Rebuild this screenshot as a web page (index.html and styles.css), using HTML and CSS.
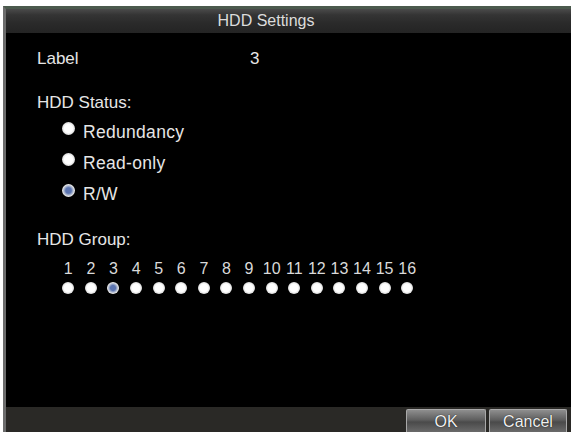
FILE: index.html
```html
<!DOCTYPE html>
<html lang="en">
<head>
  <meta charset="UTF-8">
  <title>HDD Settings</title>
  <link rel="stylesheet" href="styles.css">
</head>
<body>
<div class="window">
  <div class="titlebar">HDD Settings</div>

  <div class="content">
    <div class="row-label">
      <span class="label-name">Label</span>
      <span class="label-value">3</span>
    </div>

    <div class="section-title">HDD Status:</div>
    <div class="radio-list">
      <div class="radio-row"><span class="radio"></span>Redundancy</div>
      <div class="radio-row"><span class="radio"></span>Read-only</div>
      <div class="radio-row"><span class="radio checked"></span>R/W</div>
    </div>

    <div class="section-title group-title">HDD Group:</div>
    <div class="group-grid" id="group-grid"></div>
  </div>

  <div class="footer">
    <button class="btn btn-ok">OK</button>
    <button class="btn btn-cancel">Cancel</button>
  </div>
</div>

<script>
  const grid = document.getElementById("group-grid");
  let nums = "";
  let dots = "";
  for (let i = 1; i <= 16; i++) {
    nums += `<span class="num">${i}</span>`;
    dots += `<span class="dot${i === 3 ? " checked" : ""}"></span>`;
  }
  grid.innerHTML = nums + dots;
</script>
</body>
</html>
```

FILE: styles.css
```css
body {
  margin: 0;
  background: #ffffff;
  font-family: "Liberation Sans", Arial, sans-serif;
}
.window {
  margin: 6px 0 0 3px;
  height: 423px;
  border-top: 3px solid #4b5a4d;
  border-left: 3px solid #6c6c6c;
  background: #000000;
  display: flex;
  flex-direction: column;
  color: #e6e6e6;
}
.titlebar {
  height: 24px;
  line-height: 24px;
  font-size: 16px;
  text-align: center;
  padding-right: 45px;
  color: #dcdcdc;
  background: linear-gradient(#4a4a4a, #343434 25%, #2a2a2a 60%, #242424);
}
.content {
  flex: 1;
  padding: 16px 0 0 31px;
  font-size: 17px;
}
.row-label {
  display: flex;
  line-height: 20px;
}
.label-name {
  width: 213px;
}
.section-title {
  margin-top: 24px;
  line-height: 20px;
}
.radio-list {
  margin-top: 4px;
  padding-left: 25px;
  font-size: 17.5px;
  letter-spacing: 0.3px;
}
.radio-row {
  display: flex;
  height: 31px;
  line-height: 30px;
}
.radio {
  width: 13px;
  height: 13px;
  margin: 5px 8px 0 0;
  border-radius: 50%;
  background: radial-gradient(circle, #ffffff 45%, #d8d8d8 70%, #666666 100%);
}
.radio.checked,
.dot.checked {
  background: radial-gradient(circle, #5b74b0 30%, #9aa8c8 45%, #e8e8e8 65%, #8a8a8a 100%);
}
.group-title {
  margin-top: 20px;
}
.group-grid {
  margin: 10px 0 0 20px;
  display: grid;
  grid-template-columns: repeat(16, 22.6px);
  justify-items: center;
  align-items: center;
  row-gap: 4px;
}
.num {
  font-size: 16px;
  line-height: 18px;
  color: #dadada;
}
.dot {
  width: 12px;
  height: 12px;
  border-radius: 50%;
  background: radial-gradient(circle, #ffffff 45%, #dddddd 68%, #666666 100%);
}
.footer {
  height: 25px;
  background: #2a2926;
  display: flex;
  justify-content: flex-end;
  align-items: flex-start;
  padding: 2px 4px 0 0;
  box-sizing: border-box;
  gap: 3px;
}
.btn {
  height: 23px;
  font-family: "Liberation Sans", Arial, sans-serif;
  font-size: 16px;
  color: #f0f0f0;
  border: 1px solid #a9a9a9;
  border-bottom: none;
  border-radius: 2px 2px 0 0;
  background: linear-gradient(#8e8e8e, #5e5e5e 45%, #4a4a4a 55%, #6a6a6a);
  padding: 0;
  line-height: 21px;
  text-shadow: 0 0 1px #000;
}
.btn-ok {
  width: 80px;
}
.btn-cancel {
  width: 78px;
}
```
